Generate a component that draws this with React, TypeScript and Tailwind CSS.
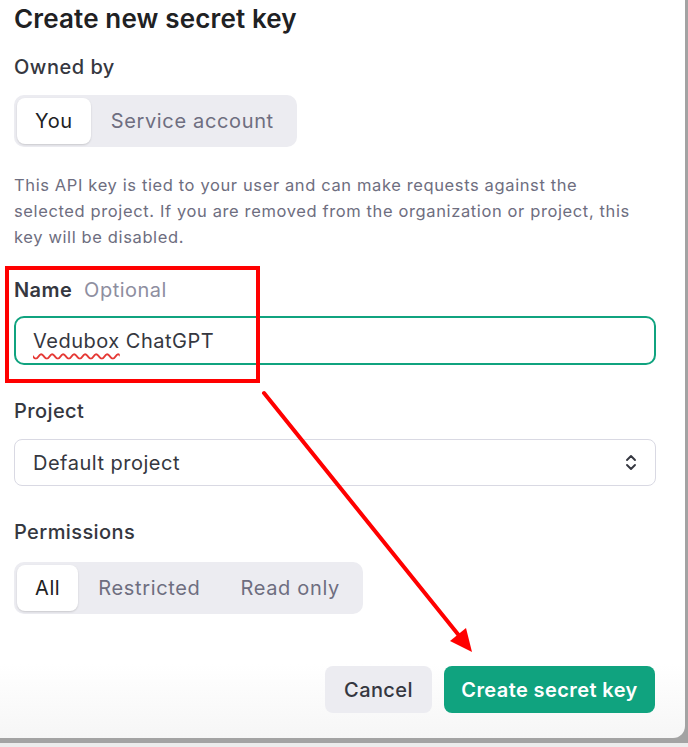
import React from "react";

function Seg({ items, active }: { items: string[]; active: number }) {
  return (
    <div className="flex h-[52px] w-fit rounded-[10px] bg-[#ececf1] p-[3px]">
      {items.map((t, i) => (
        <div
          key={t}
          className={
            i === active
              ? "flex items-center rounded-[8px] bg-white px-[18px] text-[20px] tracking-[0.6px] text-[#202123] shadow-[0_1px_2px_rgba(0,0,0,0.15)]"
              : "flex items-center px-[20px] text-[20px] tracking-[0.65px] text-[#6e6e80]"
          }
        >
          {t}
        </div>
      ))}
    </div>
  );
}

export default function App() {
  return (
    <div
      className="relative h-[747px] w-[688px] overflow-hidden bg-[#ececec]"
      style={{ fontFamily: "Inter, 'Noto Sans', sans-serif" }}
    >
      <div className="h-[743px] w-[688px] bg-[#a3a3a3]">
        <div className="flex h-[738px] w-[685px] flex-col rounded-br-[12px] bg-gradient-to-b from-white from-[90%] to-[#f6f6f6] pl-[14px] pr-[29px] pt-[3px]">
          <div className="text-[26px] font-semibold leading-[32px] tracking-[0.15px] text-[#202123]">
            Create new secret key
          </div>
          <div className="mt-[18px] text-[20px] font-medium leading-[28px] tracking-[0.5px] text-[#353740]">
            Owned by
          </div>
          <div className="mt-[14px]">
            <Seg items={["You", "Service account"]} active={0} />
          </div>
          <p className="mt-[25px] text-[16.5px] leading-[26px] tracking-[0.62px] text-[#6e6e80]">
            This API key is tied to your user and can make requests against the
            <br />
            selected project. If you are removed from the organization or project, this
            <br />
            key will be disabled.
          </p>
          <div className="mt-[26px] flex items-baseline gap-[12px] leading-[28px]">
            <span className="text-[20px] font-semibold tracking-[0.4px] text-[#353740]">Name</span>
            <span className="text-[20px] tracking-[0.5px] text-[#8e8ea0]">Optional</span>
          </div>
          <div className="mt-[12px] flex h-[49px] items-center rounded-[10px] border-2 border-[#10a37f] px-[17px] text-[20px] tracking-[0.5px] text-[#353740]">
            <span className="underline decoration-[#e53935] decoration-wavy decoration-[1.5px] underline-offset-[5px]">
              Vedubox
            </span>
            <span>&nbsp;ChatGPT</span>
          </div>
          <div className="mt-[32px] text-[20px] font-medium leading-[28px] tracking-[0.4px] text-[#353740]">
            Project
          </div>
          <div className="mt-[14px] flex h-[47px] items-center justify-between rounded-[8px] border border-[#d9d9e3] pl-[18px] pr-[18px] text-[20px] tracking-[0.5px] text-[#353740]">
            <span>Default project</span>
            <svg width="12" height="17" viewBox="0 0 12 17" fill="none" stroke="#353740" strokeWidth="1.9" strokeLinecap="round" strokeLinejoin="round">
              <path d="M2 6 L6 2 L10 6" />
              <path d="M2 11 L6 15 L10 11" />
            </svg>
          </div>
          <div className="mt-[32px] text-[20px] font-medium leading-[28px] tracking-[0.4px] text-[#353740]">
            Permissions
          </div>
          <div className="mt-[16px]">
            <Seg items={["All", "Restricted", "Read only"]} active={0} />
          </div>
          <div className="mt-[52px] flex justify-end gap-[12px] pr-[1px]">
            <button className="flex h-[47px] w-[107px] items-center justify-center rounded-[8px] bg-[#ececf1] text-[20px] font-medium tracking-[0.4px] text-[#353740]">
              Cancel
            </button>
            <button className="flex h-[47px] w-[211px] items-center justify-center rounded-[8px] bg-[#10a37f] text-[20px] font-semibold tracking-[0.4px] text-white">
              Create secret key
            </button>
          </div>
        </div>
      </div>

      {/* annotation overlays */}
      <div className="absolute left-[5px] top-[266px] h-[117px] w-[255px] border-4 border-[#ff0000]" />
      <svg className="absolute left-0 top-0" width="688" height="747" viewBox="0 0 688 747">
        <line x1="264" y1="393" x2="461" y2="638" stroke="#ff0000" strokeWidth="4" strokeLinecap="round" />
        <polygon points="472,652 466,628 450,641" fill="#ff0000" />
      </svg>
    </div>
  );
}
